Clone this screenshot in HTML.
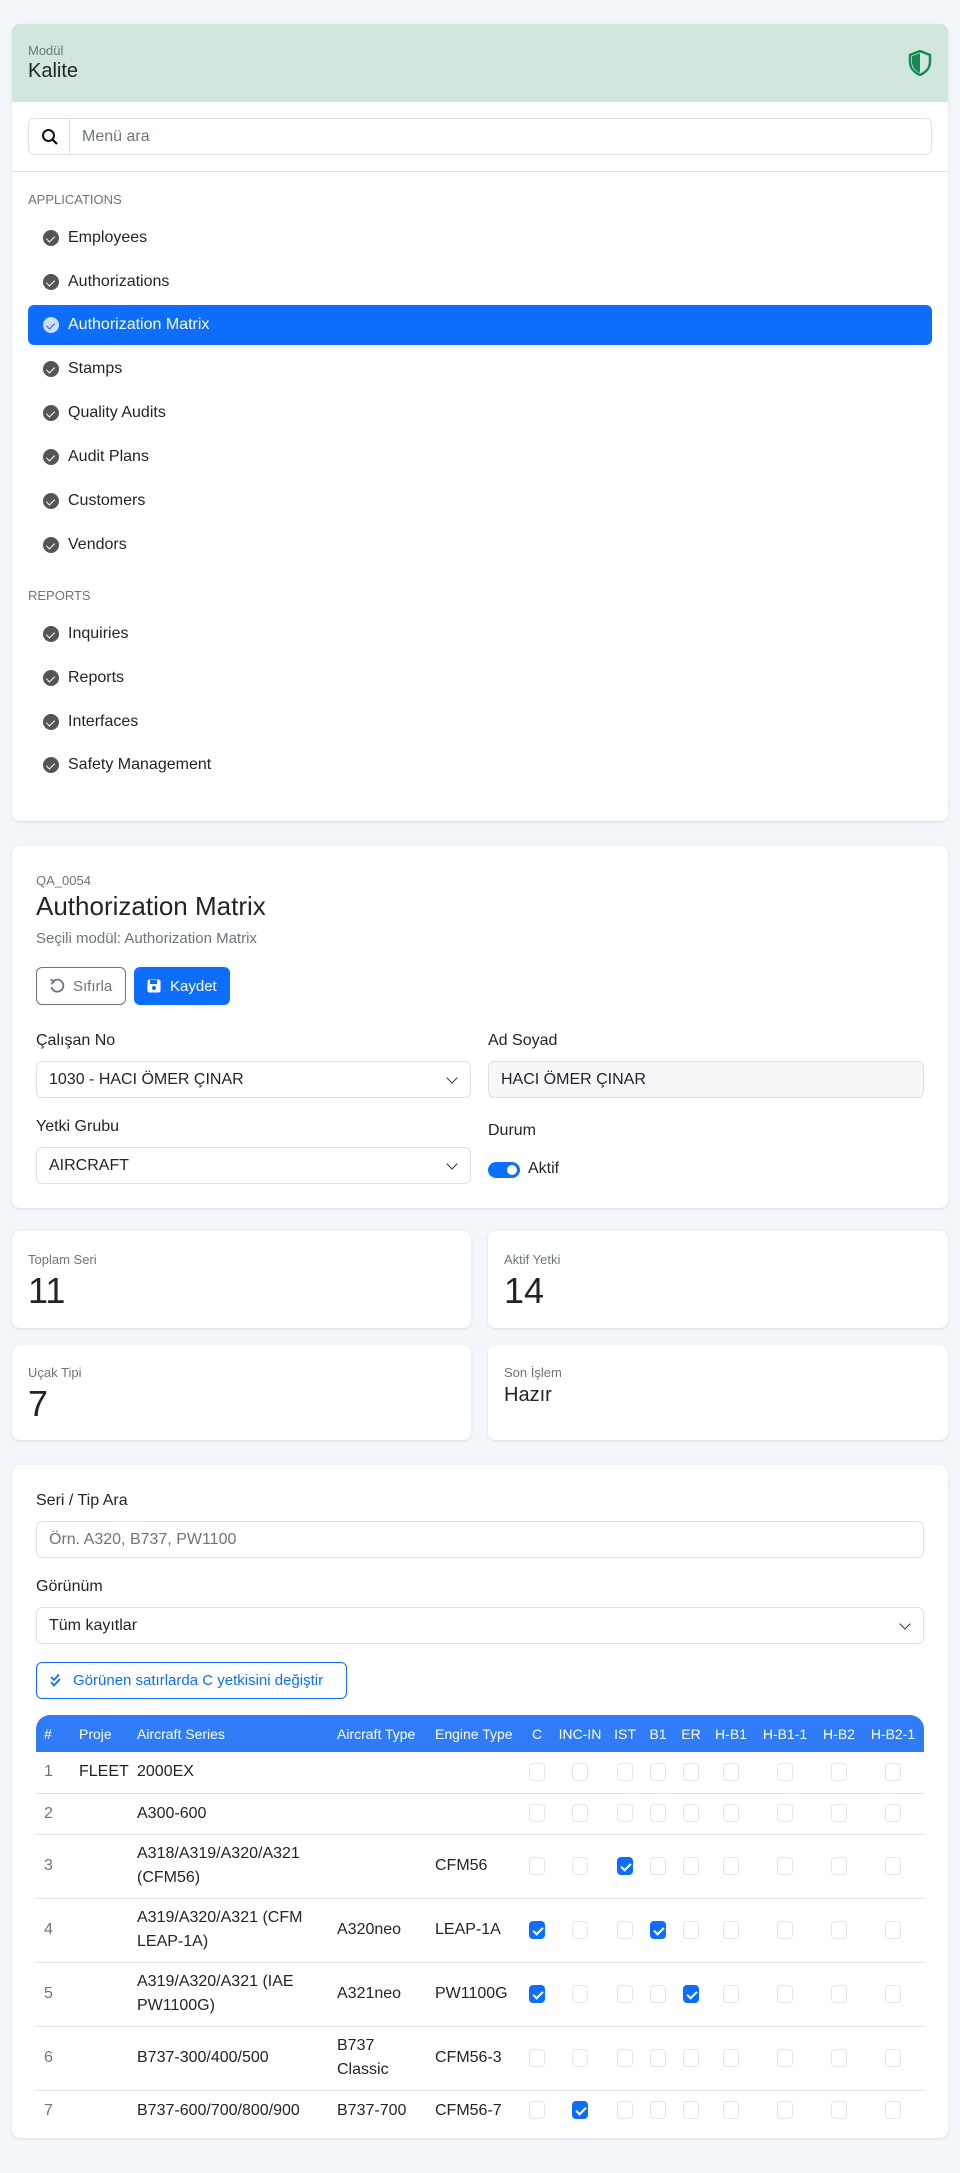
<!DOCTYPE html>
<html><head><meta charset="utf-8">
<style>
*{box-sizing:border-box;margin:0;padding:0}
body{width:960px;height:2173px;background:#f3f6fa;font-family:"Liberation Sans","Noto Sans CJK JP",sans-serif;color:#212529;position:relative;overflow:hidden}
.card{position:absolute;background:#fff;border-radius:8px;box-shadow:0 1px 3px rgba(0,0,0,.1);overflow:hidden}
.abs{position:absolute}
.muted{color:#6c757d}
.item{position:absolute;left:28px;width:904px;height:40px;border-radius:6px;display:flex;align-items:center;font-size:16px}
.item .ic{width:16px;height:16px;border-radius:50%;background:#555;margin-left:15px;margin-right:9px;position:relative}
.item .ic:after{content:"";position:absolute;left:5px;top:3.5px;width:4px;height:7px;border:solid #fff;border-width:0 1.6px 1.6px 0;transform:rotate(45deg)}
.item.act{background:#0d6efd;color:#fff}
.item.act .ic{background:#cfe0ff}
.item.act .ic:after{border-color:#0d6efd}
.sec{position:absolute;left:28px;font-size:13px;color:#6c757d}
.inp{position:absolute;border:1px solid #dee2e6;border-radius:6px;height:37px;display:flex;align-items:center;padding-left:12px;font-size:16px;background:#fff}
.chev{position:absolute;right:14px;top:12px;width:8px;height:8px;border:solid #333;border-width:0 1.5px 1.5px 0;transform:rotate(45deg)}
.lbl{position:absolute;font-size:16px}
table{border-collapse:collapse;position:absolute;left:36px;top:1715px;width:888px;font-size:16px}
th{background:#2f7cf6;color:#fff;font-weight:normal;font-size:14px;height:37px;text-align:left;padding-left:8px;white-space:nowrap}
th.cb{text-align:center;padding:0}
td{border-bottom:1px solid #dee2e6;padding:0 0 0 8px;line-height:24px;height:41px}
td.cb{text-align:center;padding:0}
.b{display:inline-block;width:16px;height:18px;border:1px solid #e3e6ea;border-radius:4px;vertical-align:middle;position:relative}
.b.on{background:#0d6efd;border-color:#0d6efd}
.b.on:after{content:"";position:absolute;left:5px;top:3px;width:4px;height:8px;border:solid #fff;border-width:0 2px 2px 0;transform:rotate(45deg)}
tr.t td{height:64px}
</style></head><body>

<div class="card" style="left:12px;top:24px;width:936px;height:797px">
  <div class="abs" style="left:0;top:0;width:936px;height:78px;background:#d1e7dd"></div>
  <div class="abs muted" style="left:16px;top:19px;font-size:13px">Modül</div>
  <div class="abs" style="left:16px;top:36px;font-size:20px">Kalite</div>
  <svg class="abs" style="left:896px;top:26px" width="24" height="26" viewBox="0 0 24 26"><path d="M12 1 L22 5 V12 C22 18 17.5 22.5 12 25 C6.5 22.5 2 18 2 12 V5 Z" fill="none" stroke="#198754" stroke-width="2.5"/><path d="M12 3 V23 C7.5 21 4 17 4 12 V6.3 Z" fill="#198754"/></svg>
  <div class="abs" style="left:0;top:147px;width:936px;height:1px;background:#dee2e6"></div>
</div>
<div class="inp" style="left:28px;top:118px;width:904px;padding-left:0">
  <div style="width:41px;height:35px;border-right:1px solid #dee2e6;position:relative">
    <svg style="position:absolute;left:12px;top:9px" width="18" height="18" viewBox="0 0 18 18"><circle cx="7.5" cy="7.5" r="5.5" fill="none" stroke="#111" stroke-width="2"/><path d="M11.5 11.5 L16 16" stroke="#111" stroke-width="2.2"/></svg>
  </div>
  <span class="muted" style="margin-left:12px">Menü ara</span>
</div>
<div class="sec" style="top:192px">APPLICATIONS</div>
<div class="item" style="top:218px"><span class="ic"></span>Employees</div>
<div class="item" style="top:262px"><span class="ic"></span>Authorizations</div>
<div class="item act" style="top:305px"><span class="ic"></span>Authorization Matrix</div>
<div class="item" style="top:349px"><span class="ic"></span>Stamps</div>
<div class="item" style="top:393px"><span class="ic"></span>Quality Audits</div>
<div class="item" style="top:437px"><span class="ic"></span>Audit Plans</div>
<div class="item" style="top:481px"><span class="ic"></span>Customers</div>
<div class="item" style="top:525px"><span class="ic"></span>Vendors</div>
<div class="sec" style="top:588px">REPORTS</div>
<div class="item" style="top:614px"><span class="ic"></span>Inquiries</div>
<div class="item" style="top:658px"><span class="ic"></span>Reports</div>
<div class="item" style="top:702px"><span class="ic"></span>Interfaces</div>
<div class="item" style="top:745px"><span class="ic"></span>Safety Management</div>

<div class="card" style="left:12px;top:846px;width:936px;height:362px"></div>
<div class="abs muted" style="left:36px;top:873px;font-size:13px">QA_0054</div>
<div class="abs" style="left:36px;top:891px;font-size:26px">Authorization Matrix</div>
<div class="abs muted" style="left:36px;top:930px;font-size:15px">Seçili modül: Authorization Matrix</div>
<div class="abs" style="left:36px;top:967px;width:90px;height:38px;border:1px solid #6c757d;border-radius:6px;font-size:15px;color:#6c757d;display:flex;align-items:center;padding-left:12px">
  <svg width="16" height="16" viewBox="0 0 16 16" style="margin-right:8px"><path d="M4 3.5 A6 6 0 1 1 2.5 9" fill="none" stroke="#6c757d" stroke-width="1.8"/><path d="M1.5 1.5 L4.8 3.6 L2.2 6.3" fill="none" stroke="#6c757d" stroke-width="1.8"/></svg>Sıfırla</div>
<div class="abs" style="left:134px;top:967px;width:96px;height:38px;background:#0d6efd;border-radius:6px;font-size:15px;color:#fff;display:flex;align-items:center;padding-left:12px">
  <svg width="16" height="16" viewBox="0 0 16 16" style="margin-right:8px"><rect x="1.5" y="1.5" width="13" height="13" rx="2" fill="#fff"/><rect x="4" y="2" width="7" height="4" fill="#0d6efd"/><circle cx="8" cy="10" r="2" fill="#0d6efd"/></svg>Kaydet</div>
<div class="lbl" style="left:36px;top:1032px">Çalışan No</div>
<div class="inp" style="left:36px;top:1061px;width:435px">1030 - HACI ÖMER ÇINAR<span class="chev"></span></div>
<div class="lbl" style="left:488px;top:1032px">Ad Soyad</div>
<div class="inp" style="left:488px;top:1061px;width:436px;background:#f6f7f9">HACI ÖMER ÇINAR</div>
<div class="lbl" style="left:36px;top:1118px">Yetki Grubu</div>
<div class="inp" style="left:36px;top:1147px;width:435px">AIRCRAFT<span class="chev"></span></div>
<div class="lbl" style="left:488px;top:1122px">Durum</div>
<div class="abs" style="left:488px;top:1162px;width:32px;height:16px;border-radius:8px;background:#0d6efd"><div style="position:absolute;right:3px;top:3px;width:10px;height:10px;border-radius:50%;background:#fff"></div></div>
<div class="lbl" style="left:528px;top:1160px">Aktif</div>

<div class="card" style="left:12px;top:1231px;width:459px;height:97px"></div>
<div class="card" style="left:488px;top:1231px;width:460px;height:97px"></div>
<div class="card" style="left:12px;top:1345px;width:459px;height:95px"></div>
<div class="card" style="left:488px;top:1345px;width:460px;height:95px"></div>
<div class="abs muted" style="left:28px;top:1252px;font-size:13px">Toplam Seri</div>
<div class="abs" style="left:28px;top:1270px;font-size:36px">11</div>
<div class="abs muted" style="left:504px;top:1252px;font-size:13px">Aktif Yetki</div>
<div class="abs" style="left:504px;top:1270px;font-size:36px">14</div>
<div class="abs muted" style="left:28px;top:1365px;font-size:13px">Uçak Tipi</div>
<div class="abs" style="left:28px;top:1383px;font-size:36px">7</div>
<div class="abs muted" style="left:504px;top:1365px;font-size:13px">Son İşlem</div>
<div class="abs" style="left:504px;top:1384px;font-size:20px">Hazır</div>

<div class="card" style="left:12px;top:1465px;width:936px;height:673px"></div>
<div class="lbl" style="left:36px;top:1492px">Seri / Tip Ara</div>
<div class="inp" style="left:36px;top:1521px;width:888px"><span class="muted">Örn. A320, B737, PW1100</span></div>
<div class="lbl" style="left:36px;top:1578px">Görünüm</div>
<div class="inp" style="left:36px;top:1607px;width:888px">Tüm kayıtlar<span class="chev"></span></div>
<div class="abs" style="left:36px;top:1662px;width:311px;height:37px;border:1px solid #0d6efd;border-radius:6px;color:#0d6efd;font-size:15px;display:flex;align-items:center;padding-left:12px">
  <svg width="16" height="16" viewBox="0 0 16 16" style="margin-right:8px"><path d="M2 4 L5 7 L10 1.5 M2 9 L5 12.5 L11 6" fill="none" stroke="#0d6efd" stroke-width="1.8"/></svg>Görünen satırlarda C yetkisini değiştir</div>

<div class="abs" style="left:36px;top:1715px;width:888px;height:410px;overflow:hidden;border-radius:14px 14px 0 0">
<table style="left:0;top:0">
<colgroup><col style="width:35px"><col style="width:58px"><col style="width:200px"><col style="width:98px"><col style="width:95px"><col style="width:30px"><col style="width:56px"><col style="width:34px"><col style="width:32px"><col style="width:34px"><col style="width:46px"><col style="width:62px"><col style="width:46px"><col style="width:62px"></colgroup>
<tr><th style="padding-left:8px">#</th><th>Proje</th><th>Aircraft Series</th><th>Aircraft Type</th><th>Engine Type</th><th class="cb">C</th><th class="cb">INC-IN</th><th class="cb">IST</th><th class="cb">B1</th><th class="cb">ER</th><th class="cb">H-B1</th><th class="cb">H-B1-1</th><th class="cb">H-B2</th><th class="cb">H-B2-1</th></tr>
<tr><td class="muted">1</td><td>FLEET</td><td>2000EX</td><td></td><td></td><td class="cb"><i class="b"></i></td><td class="cb"><i class="b"></i></td><td class="cb"><i class="b"></i></td><td class="cb"><i class="b"></i></td><td class="cb"><i class="b"></i></td><td class="cb"><i class="b"></i></td><td class="cb"><i class="b"></i></td><td class="cb"><i class="b"></i></td><td class="cb"><i class="b"></i></td></tr>
<tr><td class="muted">2</td><td></td><td>A300-600</td><td></td><td></td><td class="cb"><i class="b"></i></td><td class="cb"><i class="b"></i></td><td class="cb"><i class="b"></i></td><td class="cb"><i class="b"></i></td><td class="cb"><i class="b"></i></td><td class="cb"><i class="b"></i></td><td class="cb"><i class="b"></i></td><td class="cb"><i class="b"></i></td><td class="cb"><i class="b"></i></td></tr>
<tr class="t"><td class="muted">3</td><td></td><td>A318/A319/A320/A321<br>(CFM56)</td><td></td><td>CFM56</td><td class="cb"><i class="b"></i></td><td class="cb"><i class="b"></i></td><td class="cb"><i class="b on"></i></td><td class="cb"><i class="b"></i></td><td class="cb"><i class="b"></i></td><td class="cb"><i class="b"></i></td><td class="cb"><i class="b"></i></td><td class="cb"><i class="b"></i></td><td class="cb"><i class="b"></i></td></tr>
<tr class="t"><td class="muted">4</td><td></td><td>A319/A320/A321 (CFM<br>LEAP-1A)</td><td>A320neo</td><td>LEAP-1A</td><td class="cb"><i class="b on"></i></td><td class="cb"><i class="b"></i></td><td class="cb"><i class="b"></i></td><td class="cb"><i class="b on"></i></td><td class="cb"><i class="b"></i></td><td class="cb"><i class="b"></i></td><td class="cb"><i class="b"></i></td><td class="cb"><i class="b"></i></td><td class="cb"><i class="b"></i></td></tr>
<tr class="t"><td class="muted">5</td><td></td><td>A319/A320/A321 (IAE<br>PW1100G)</td><td>A321neo</td><td>PW1100G</td><td class="cb"><i class="b on"></i></td><td class="cb"><i class="b"></i></td><td class="cb"><i class="b"></i></td><td class="cb"><i class="b"></i></td><td class="cb"><i class="b on"></i></td><td class="cb"><i class="b"></i></td><td class="cb"><i class="b"></i></td><td class="cb"><i class="b"></i></td><td class="cb"><i class="b"></i></td></tr>
<tr class="t"><td class="muted">6</td><td></td><td>B737-300/400/500</td><td>B737<br>Classic</td><td>CFM56-3</td><td class="cb"><i class="b"></i></td><td class="cb"><i class="b"></i></td><td class="cb"><i class="b"></i></td><td class="cb"><i class="b"></i></td><td class="cb"><i class="b"></i></td><td class="cb"><i class="b"></i></td><td class="cb"><i class="b"></i></td><td class="cb"><i class="b"></i></td><td class="cb"><i class="b"></i></td></tr>
<tr><td class="muted">7</td><td></td><td style="white-space:nowrap">B737-600/700/800/900</td><td>B737-700</td><td>CFM56-7</td><td class="cb"><i class="b"></i></td><td class="cb"><i class="b on"></i></td><td class="cb"><i class="b"></i></td><td class="cb"><i class="b"></i></td><td class="cb"><i class="b"></i></td><td class="cb"><i class="b"></i></td><td class="cb"><i class="b"></i></td><td class="cb"><i class="b"></i></td><td class="cb"><i class="b"></i></td></tr>
</table>
</div>
</body></html>
